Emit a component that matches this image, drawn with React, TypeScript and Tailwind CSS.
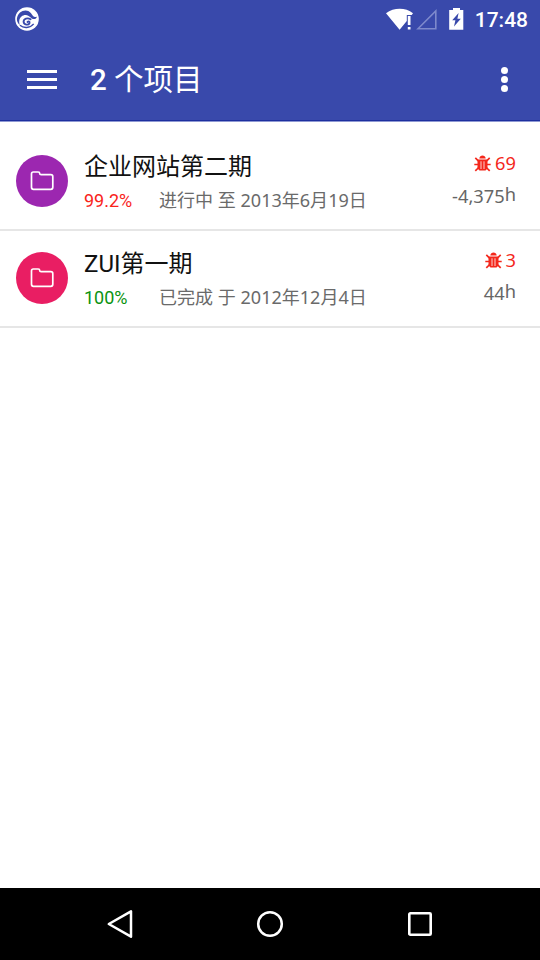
import React from 'react';

type Project = {
  name: string;
  percent: string;
  percentClass: string;
  status: string;
  bugs: string;
  hours: string;
  circleClass: string;
};

const projects: Project[] = [
  {
    name: '企业网站第二期',
    percent: '99.2%',
    percentClass: 'text-[#f9231b]',
    status: '进行中 至 2013年6月19日',
    bugs: '69',
    hours: '-4,375',
    circleClass: 'bg-[#9c27b0]',
  },
  {
    name: 'ZUI第一期',
    percent: '100%',
    percentClass: 'text-[#0a9310]',
    status: '已完成 于 2012年12月4日',
    bugs: '3',
    hours: '44',
    circleClass: 'bg-[#e91e63]',
  },
];

function AppLogo() {
  return (
    <svg width="24" height="24" viewBox="0 0 24 24" fill="none">
      <circle cx="12" cy="12" r="11.8" fill="#fff" />
      <path d="M1.9 11.5C2.8 6.5 6.5 3.6 10.5 3.6C15 3.6 16.3 7 18 9C19.2 10.4 20.8 10.4 21.9 9.4C21.5 12 19 12.8 16.8 11.4C14.6 10 13.6 8.2 11 8C7.6 7.8 5 10.2 4.4 12.8C4 14.8 4.2 16.4 4.9 18C2.8 16.4 1.6 13.8 1.9 11.5Z" fill="#3949ab" />
      <path d="M15.6 12.3C12.6 10.4 8.6 11.6 8.6 14.8C8.8 18.1 13.6 18.5 14.5 16.1C14.9 14.8 13.6 14 12.5 14.9" stroke="#3949ab" strokeWidth="1.9" strokeLinecap="round" />
      <path d="M4.9 18.3C8.5 21.4 14.8 21.6 18.7 16.9" stroke="#3949ab" strokeWidth="1.4" />
    </svg>
  );
}

function StatusIcons() {
  return (
    <svg width="80" height="24" viewBox="0 0 80 24">
      <path d="M0 5.2C8 -0.6 19.5 -0.6 27 5.2L25.7 7H20.8V13L13.6 21.8Z" fill="#fff" />
      <path d="M21.8 8H24.5V17H21.8ZM21.8 19H24.5V21.6H21.8Z" fill="#fff" />
      <path d="M32 20.7L49.8 2.9V20.7Z" fill="none" stroke="#7e89cc" strokeWidth="1.6" />
      <path d="M67 0H74V2H77.3V21.8H63.2V2H67Z" fill="#fff" />
      <path d="M72.6 5L66.2 12.3H69.4L68 18.6L74.8 10.7H71.4Z" fill="#3949ab" />
    </svg>
  );
}

function FolderIcon() {
  return (
    <svg width="24" height="20" viewBox="0 0 24 20" fill="none" stroke="#fff" strokeWidth="1.7" strokeLinejoin="round">
      <path d="M3.3 1H8.2C9.2 1 9.7 1.6 9.7 2.4C9.7 3.2 10.3 3.7 11.1 3.7H20.8C22.1 3.7 22.8 4.5 22.8 5.7V16.3C22.8 17.6 22 18.3 20.8 18.3H3.5C2.3 18.3 1.5 17.6 1.5 16.3V3C1.5 1.8 2.2 1 3.3 1Z" />
    </svg>
  );
}

function BugIcon() {
  return (
    <svg width="17" height="17" viewBox="0 0 17 17" fill="none" stroke="#f4281c">
      <path d="M5.3 3.5C5.6 -0.4 11.4 -0.4 11.7 3.5Z" fill="#f4281c" stroke="none" />
      <path d="M3.5 4.5H13.5V13.6L11.5 15.5H5.5L3.5 13.6Z" fill="#f4281c" stroke="none" />
      <path d="M7 6.3V14M10 6.3V14" stroke="#fff" strokeWidth="0.8" />
      <path d="M1.3 2.9L4.3 5.8M15.7 2.9L12.7 5.8M0.3 9.5H4M16.7 9.5H13M1.3 15.9L4.7 12.5M15.7 15.9L12.3 12.5" strokeWidth="1.7" />
    </svg>
  );
}

function ProjectRow({ project }: { project: Project }) {
  return (
    <li className="flex h-[97px] items-start border-b-2 border-[#e6e6e6] pr-6 pl-4">
      <div className={'mt-[21px] flex size-[52px] items-center justify-center rounded-full ' + project.circleClass}>
        <FolderIcon />
      </div>
      <div className="ml-4 flex-1 pt-[17px]">
        <h2 className="h-8 font-[Roboto,'Noto_Sans_CJK_SC',sans-serif] text-2xl leading-8 whitespace-nowrap text-[#111]">
          {project.name}
        </h2>
        <div className="mt-1.5 flex h-6 text-lg leading-6 whitespace-nowrap">
          <span className={'w-[75px] font-[Roboto,sans-serif] ' + project.percentClass}>{project.percent}</span>
          <span className="-mt-px font-['Noto_Sans','Noto_Sans_CJK_SC',sans-serif] text-[18.05px] text-[#6a6a6a]">{project.status}</span>
        </div>
      </div>
      <div className="flex flex-col items-end pt-[17px] font-['Noto_Sans',sans-serif] text-[18.3px] leading-6">
        <div className="flex h-6 items-center gap-1 text-[#f4281c]">
          <BugIcon />
          <span>{project.bugs}</span>
        </div>
        <div className="mt-[9px] flex h-6 text-[#666]">
          <span>{project.hours}</span>
          <span className="-mt-0.5">h</span>
        </div>
      </div>
    </li>
  );
}

export default function App() {
  return (
    <div className="flex h-[960px] w-[540px] flex-col overflow-hidden bg-white">
      <header className="h-[122px] border-b border-[#8f99d3] bg-[#3949ab] text-white">
        <div className="flex h-[38px] items-center pr-3 pl-[15px]">
          <AppLogo />
          <div className="ml-auto flex items-center pt-0.5">
            <StatusIcons />
            <time className="ml-[9px] font-[Roboto,sans-serif] text-[21px] leading-6 font-medium">17:48</time>
          </div>
        </div>
        <div className="flex h-[83px] items-center border-b border-[#1d2f9e] pr-8 pl-[27px]">
          <div className="flex w-[30px] flex-col gap-[5px]">
            <i className="h-[3px] bg-white" />
            <i className="h-[3px] bg-white" />
            <i className="h-[3px] bg-white" />
          </div>
          <h1 className="ml-[33px] pt-px font-[Roboto,'Noto_Sans_CJK_SC',sans-serif] text-[29.5px] leading-10 font-medium">
            2 <span className="font-normal">个项目</span>
          </h1>
          <div className="ml-auto flex flex-col gap-0.5">
            <i className="size-[7px] rounded-full bg-white" />
            <i className="size-[7px] rounded-full bg-white" />
            <i className="size-[7px] rounded-full bg-white" />
          </div>
        </div>
      </header>
      <ul className="flex-1 pt-3">
        {projects.map((project) => (
          <ProjectRow key={project.name} project={project} />
        ))}
      </ul>
      <nav className="flex h-[72px] items-center justify-center gap-[122px] bg-black">
        <svg width="28" height="30" viewBox="0 0 28 30" fill="none" stroke="#fff" strokeWidth="2.5" strokeLinejoin="round">
          <path d="M25 2.3V27.7L2.8 15Z" />
        </svg>
        <svg width="28" height="28" viewBox="0 0 28 28" fill="none" stroke="#fff" strokeWidth="2.5">
          <circle cx="14" cy="14" r="11.8" />
        </svg>
        <svg width="28" height="28" viewBox="0 0 28 28" fill="none" stroke="#fff" strokeWidth="2.6">
          <rect x="3.3" y="3.3" width="21.4" height="21.4" rx="1" />
        </svg>
      </nav>
    </div>
  );
}
